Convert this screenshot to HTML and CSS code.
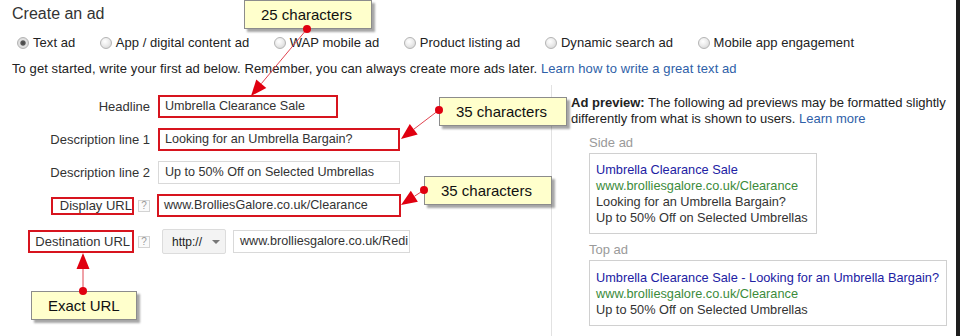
FILE: index.html
```html
<!DOCTYPE html>
<html lang="en">
<head>
<meta charset="utf-8">
<title>Create an ad</title>
<link rel="stylesheet" href="styles.css">
</head>
<body>
<div class="page">
  <div class="main">
    <header class="intro">
      <h1 class="title">Create an ad</h1>
      <div class="types">
        <span class="type"><span class="radio on"></span>Text ad</span>
        <span class="type"><span class="radio"></span>App / digital content ad</span>
        <span class="type"><span class="radio"></span>WAP mobile ad</span>
        <span class="type"><span class="radio"></span>Product listing ad</span>
        <span class="type"><span class="radio"></span>Dynamic search ad</span>
        <span class="type"><span class="radio"></span>Mobile app engagement</span>
      </div>
      <p class="hint">To get started, write your first ad below. Remember, you can always create more ads later. <a href="#">Learn how to write a great text ad</a></p>
    </header>
    <div class="work">
      <div class="form">
        <div class="label">Headline</div>
        <div class="field"><div class="input short marked">Umbrella Clearance Sale</div></div>

        <div class="label">Description line 1</div>
        <div class="field"><div class="input marked">Looking for an Umbrella Bargain?</div></div>

        <div class="label">Description line 2</div>
        <div class="field"><div class="input">Up to 50% Off on Selected Umbrellas</div></div>

        <div class="label"><span class="mark">Display URL</span><span class="help">?</span></div>
        <div class="field"><div class="input marked wide">www.BrolliesGalore.co.uk/Clearance</div></div>

        <div class="label"><span class="mark tall">Destination URL</span><span class="help">?</span></div>
        <div class="field">
          <div class="select"><span>http://</span><span class="caret"></span></div>
          <div class="input dest">www.brolliesgalore.co.uk/Redi</div>
        </div>
      </div>
      <aside class="preview">
        <p class="note"><b>Ad preview:</b> The following ad previews may be formatted slightly differently from what is shown to users. <a href="#">Learn more</a></p>
        <div class="slot">Side ad</div>
        <div class="ad side">
          <div class="ad-title">Umbrella Clearance Sale</div>
          <div class="ad-url">www.brolliesgalore.co.uk/Clearance</div>
          <div class="ad-line">Looking for an Umbrella Bargain?</div>
          <div class="ad-line">Up to 50% Off on Selected Umbrellas</div>
        </div>
        <div class="slot">Top ad</div>
        <div class="ad top">
          <div class="ad-title">Umbrella Clearance Sale - Looking for an Umbrella Bargain?</div>
          <div class="ad-url">www.brolliesgalore.co.uk/Clearance</div>
          <div class="ad-line">Up to 50% Off on Selected Umbrellas</div>
        </div>
      </aside>
    </div>
  </div>
  <div class="edge"></div>

  <div class="callout c25">25 characters</div>
  <div class="callout c35a">35 characters</div>
  <div class="callout c35b">35 characters</div>
  <div class="callout cexact">Exact URL</div>

  <svg class="arrows" width="960" height="336" viewBox="0 0 960 336" xmlns="http://www.w3.org/2000/svg">
    <g stroke="#e04450" stroke-width="1" fill="none">
      <line x1="307" y1="29" x2="261.3" y2="83.7"/>
      <line x1="439" y1="110" x2="413.7" y2="129.3"/>
      <line x1="424" y1="190" x2="414.4" y2="196.3"/>
      <line x1="83" y1="291" x2="83" y2="269"/>
    </g>
    <g fill="#e00010">
      <circle cx="307" cy="29" r="4"/>
      <circle cx="439" cy="110" r="4"/>
      <circle cx="424" cy="190" r="4"/>
      <circle cx="83" cy="291" r="4"/>
      <polygon points="251,96 266.3,87.9 256.3,79.6"/>
      <polygon points="401,139 417.7,134.5 409.8,124.1"/>
      <polygon points="401,205 417.9,201.7 410.8,190.8"/>
      <polygon points="83,253 76.5,269 89.5,269"/>
    </g>
  </svg>
</div>
</body>
</html>
```
FILE: styles.css
```css
* { box-sizing: border-box; }
html, body { margin: 0; padding: 0; background: #fff; }
body {
  font-family: "Liberation Sans", Arial, sans-serif;
  font-size: 13px;
  color: #333;
}
a { color: #2f5fa8; text-decoration: none; }

.page {
  position: relative;
  display: flex;
  width: 960px;
  height: 336px;
  overflow: hidden;
}
.main {
  flex: 1;
  min-width: 0;
  display: flex;
  flex-direction: column;
}
.edge { width: 4px; background: #1e1e1e; }

/* header */
.intro { padding: 4px 0 8px 12px; }
.title {
  margin: 0;
  font-size: 16px;
  line-height: 19px;
  font-weight: normal;
  color: #333;
}
.types {
  display: flex;
  gap: 24.5px;
  margin-top: 12px;
  padding-left: 5px;
  line-height: 16px;
  color: #222;
  letter-spacing: 0.05px;
}
.type { display: flex; align-items: center; gap: 4px; white-space: nowrap; }
.radio {
  width: 12px;
  height: 12px;
  border-radius: 50%;
  border: 1px solid #b4b4b4;
  background: radial-gradient(circle at 40% 35%, #ffffff 0, #ececec 45%, #cfcfcf 100%);
}
.radio.on {
  background: radial-gradient(circle at 50% 50%, #444 0, #5a5a5a 2.2px, #e4e4e4 3.2px, #cdcdcd 100%);
}
.hint { margin: 10px 0 0; line-height: 16px; color: #222; white-space: nowrap; letter-spacing: 0.08px; }

/* body */
.work { flex: 1; display: flex; }
.form {
  width: 551px;
  flex: none;
  display: grid;
  grid-template-columns: 150px 1fr;
  grid-template-rows: repeat(4, 23px) 29px;
  column-gap: 8px;
  row-gap: 10px;
  align-items: center;
  align-content: start;
  padding-top: 10px;
}
.label {
  display: flex;
  justify-content: flex-end;
  align-items: center;
  gap: 4px;
  color: #333;
  white-space: nowrap;
}
.mark {
  border: 2px solid #d7141e;
  padding: 0 0 0 7px;
  line-height: 14px;
}
.mark.tall { padding: 2px 2px 2px 5px; line-height: 15px; }
.help {
  width: 12px;
  height: 12px;
  border: 1px solid #d3d3d3;
  background: #fafafa;
  color: #9a9a9a;
  font-size: 10px;
  line-height: 10px;
  text-align: center;
}
.field { display: flex; align-items: center; gap: 7px; }
.input {
  width: 242px;
  height: 23px;
  border: 1px solid #d9d9d9;
  padding: 0 6px;
  font-size: 12.6px;
  line-height: 21px;
  color: #333;
  white-space: nowrap;
  overflow: hidden;
}
.input.marked { border: 2px solid #d7141e; padding: 0 5px; line-height: 19px; }
.input.short { width: 180px; }
.input.wide { width: 244px; margin-left: -1px; }
.input.dest { width: 177px; padding: 0 3px 0 6px; }
.select {
  margin-left: 4px;
  width: 64px;
  height: 25px;
  border: 1px solid #dcdcdc;
  border-radius: 2px;
  background: #f3f3f3;
  display: flex;
  align-items: center;
  padding: 0 5px 0 9px;
  font-size: 12px;
  color: #222;
}
.caret {
  margin-left: auto;
  width: 0;
  height: 0;
  border-left: 4px solid transparent;
  border-right: 4px solid transparent;
  border-top: 4px solid #777;
}

/* preview */
.preview {
  flex: 1;
  border-left: 1px solid #e2e2e2;
  padding: 10px 0 0 19px;
  color: #222;
}
.note { margin: 0; line-height: 16px; }
.note b { color: #222; }
.slot {
  margin: 8px 0 2px 18px;
  line-height: 16px;
  color: #9a9a9a;
}
.ad {
  margin-left: 18px;
  border: 1px solid #d0d0d0;
  font-size: 12.75px;
  line-height: 16px;
  white-space: nowrap;
}
.ad.side { width: 228px; padding: 8px 6px 7px; }
.ad.top { width: 358px; padding: 9px 6px 7px; }
.ad-title { color: #2121a3; }
.ad-url { color: #3b8b3b; }
.ad-line { color: #333; }

/* annotations */
.callout {
  position: absolute;
  height: 29px;
  border: 1px solid #8c8c8c;
  background: #ffffcc;
  box-shadow: 3px 3px 2px rgba(0, 0, 0, 0.35);
  font-size: 15px;
  line-height: 27px;
  color: #111;
  padding-left: 16px;
  white-space: nowrap;
}
.c25 { left: 244px; top: 0; width: 128px; }
.c35a { left: 439px; top: 97px; width: 128px; }
.c35b { left: 424px; top: 176px; width: 128px; }
.cexact { left: 31px; top: 291px; width: 106px; }
.arrows {
  position: absolute;
  left: 0;
  top: 0;
  pointer-events: none;
}
```
